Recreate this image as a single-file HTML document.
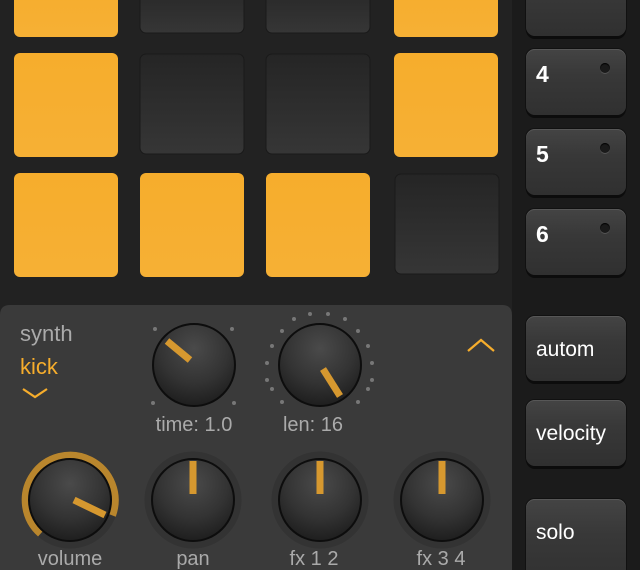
<!DOCTYPE html>
<html><head><meta charset="utf-8"><style>
html,body{margin:0;padding:0;background:#222;width:640px;height:570px;overflow:hidden;}
body{position:relative;font-family:"Liberation Sans",sans-serif;}
.btn{position:absolute;left:526px;width:100px;border-radius:9px;background:linear-gradient(#444,#383838 40%,#303030);box-shadow:0 3px 0 #0c0c0c,0 0 0 1px #111,inset 0 1px 0 #575757;color:#fff;font-size:21px;}
.btn span{position:absolute;left:10px;top:12px;}
.btn span.t{top:22px;font-size:21px;}
.led{position:absolute;right:16px;top:14px;width:10px;height:10px;border-radius:50%;background:#1a1a1a;box-shadow:inset 0 1px 1px #000,0 1px 0 #555;}
.lbl{position:absolute;color:#aaa;font-size:20px;text-align:center;width:120px;}
</style></head><body>
<svg width="640" height="570" style="position:absolute;left:0;top:0">
<defs>
<linearGradient id="og" x1="0" y1="0" x2="0" y2="1"><stop offset="0" stop-color="#f6ad2c"/><stop offset="1" stop-color="#f6b035"/></linearGradient>
<linearGradient id="dg" x1="0" y1="0" x2="0" y2="1"><stop offset="0" stop-color="#252525"/><stop offset="1" stop-color="#363636"/></linearGradient>
<radialGradient id="kg" cx="0.5" cy="0.3" r="0.7"><stop offset="0" stop-color="#4a4a4a"/><stop offset="0.6" stop-color="#333"/><stop offset="1" stop-color="#1e1e1e"/></radialGradient>
</defs>
<rect x="512" y="0" width="128" height="570" fill="#1b1b1b"/>
<g>
<rect x="14" y="-20" width="104" height="57" rx="6" fill="url(#og)"/>
<rect x="140" y="-20" width="104" height="53" rx="6" fill="url(#dg)" stroke="#1a1a1a"/>
<rect x="266" y="-20" width="104" height="53" rx="6" fill="url(#dg)" stroke="#1a1a1a"/>
<rect x="394" y="-20" width="104" height="57" rx="6" fill="url(#og)"/>
<rect x="14" y="53" width="104" height="104" rx="6" fill="url(#og)"/>
<rect x="140" y="54" width="104" height="100" rx="6" fill="url(#dg)" stroke="#1a1a1a"/>
<rect x="266" y="54" width="104" height="100" rx="6" fill="url(#dg)" stroke="#1a1a1a"/>
<rect x="394" y="53" width="104" height="104" rx="6" fill="url(#og)"/>
<rect x="14" y="173" width="104" height="104" rx="6" fill="url(#og)"/>
<rect x="140" y="173" width="104" height="104" rx="6" fill="url(#og)"/>
<rect x="266" y="173" width="104" height="104" rx="6" fill="url(#og)"/>
<rect x="395" y="174" width="104" height="100" rx="6" fill="url(#dg)" stroke="#1a1a1a"/>
</g>
<path d="M0 315 Q0 305 10 305 H502 Q512 305 512 315 V570 H0Z" fill="#3a3a3a"/>
<g fill="#777">
<circle cx="155" cy="329" r="2"/><circle cx="232" cy="329" r="2"/><circle cx="153" cy="403" r="2"/><circle cx="234" cy="403" r="2"/>
<circle cx="310" cy="314" r="2"/><circle cx="328" cy="314" r="2"/><circle cx="294" cy="319" r="2"/><circle cx="345" cy="319" r="2"/>
<circle cx="282" cy="331" r="2"/><circle cx="358" cy="331" r="2"/><circle cx="272" cy="346" r="2"/><circle cx="368" cy="346" r="2"/>
<circle cx="267" cy="363" r="2"/><circle cx="372" cy="363" r="2"/><circle cx="267" cy="380" r="2"/><circle cx="372" cy="380" r="2"/>
<circle cx="272" cy="389" r="2"/><circle cx="368" cy="389" r="2"/><circle cx="282" cy="402" r="2"/><circle cx="358" cy="402" r="2"/>
</g>
<g fill="none" stroke-width="7">
<circle cx="193" cy="500" r="45" stroke="#333"/>
<circle cx="320" cy="500" r="45" stroke="#333"/>
<circle cx="442" cy="500" r="45" stroke="#333"/>
<circle cx="70" cy="500" r="45" stroke="#333"/>
<path d="M40.4 533.9 A45 45 0 1 1 112.5 515.5" stroke="#b9862d"/>
</g>
<g stroke="#0d0d0d" stroke-width="2" fill="url(#kg)">
<circle cx="194" cy="365" r="41"/><circle cx="320" cy="365" r="41"/>
<circle cx="70" cy="500" r="41"/><circle cx="193" cy="500" r="41"/><circle cx="320" cy="500" r="41"/><circle cx="442" cy="500" r="41"/>
</g>
<g stroke="#d6982f" stroke-width="7">
<line x1="167" y1="341" x2="190" y2="360"/>
<line x1="323" y1="369" x2="340" y2="396"/>
<line x1="74" y1="500" x2="105" y2="515"/>
<line x1="193" y1="461" x2="193" y2="494"/>
<line x1="320" y1="461" x2="320" y2="494"/>
<line x1="442" y1="461" x2="442" y2="494"/>
</g>
<g stroke="#f6ad2c" stroke-width="2.2" fill="none">
<polyline points="23,389 35,397 47,389"/>
<polyline points="468,351 481,340 494,351"/>
</g>
</svg>
<div style="position:absolute;left:20px;top:321px;color:#aaa;font-size:22px">synth</div>
<div style="position:absolute;left:20px;top:354px;color:#f6ad2c;font-size:22px">kick</div>
<div class="lbl" style="left:134px;top:414px">time: 1.0</div>
<div class="lbl" style="left:253px;top:414px">len: 16</div>
<div class="lbl" style="left:10px;top:548px">volume</div>
<div class="lbl" style="left:133px;top:548px">pan</div>
<div class="lbl" style="left:254px;top:548px">fx 1 2</div>
<div class="lbl" style="left:381px;top:548px">fx 3 4</div>
<div class="btn" style="top:-30px;height:66px"></div>
<div class="btn" style="top:49px;height:66px"><span style="font-weight:bold;font-size:23px">4</span><div class="led"></div></div>
<div class="btn" style="top:129px;height:66px"><span style="font-weight:bold;font-size:23px">5</span><div class="led"></div></div>
<div class="btn" style="top:209px;height:66px"><span style="font-weight:bold;font-size:23px">6</span><div class="led"></div></div>
<div class="btn" style="top:316px;height:65px"><span class="t">autom</span></div>
<div class="btn" style="top:400px;height:66px"><span class="t">velocity</span></div>
<div class="btn" style="top:499px;height:90px"><span class="t">solo</span></div>
</body></html>
